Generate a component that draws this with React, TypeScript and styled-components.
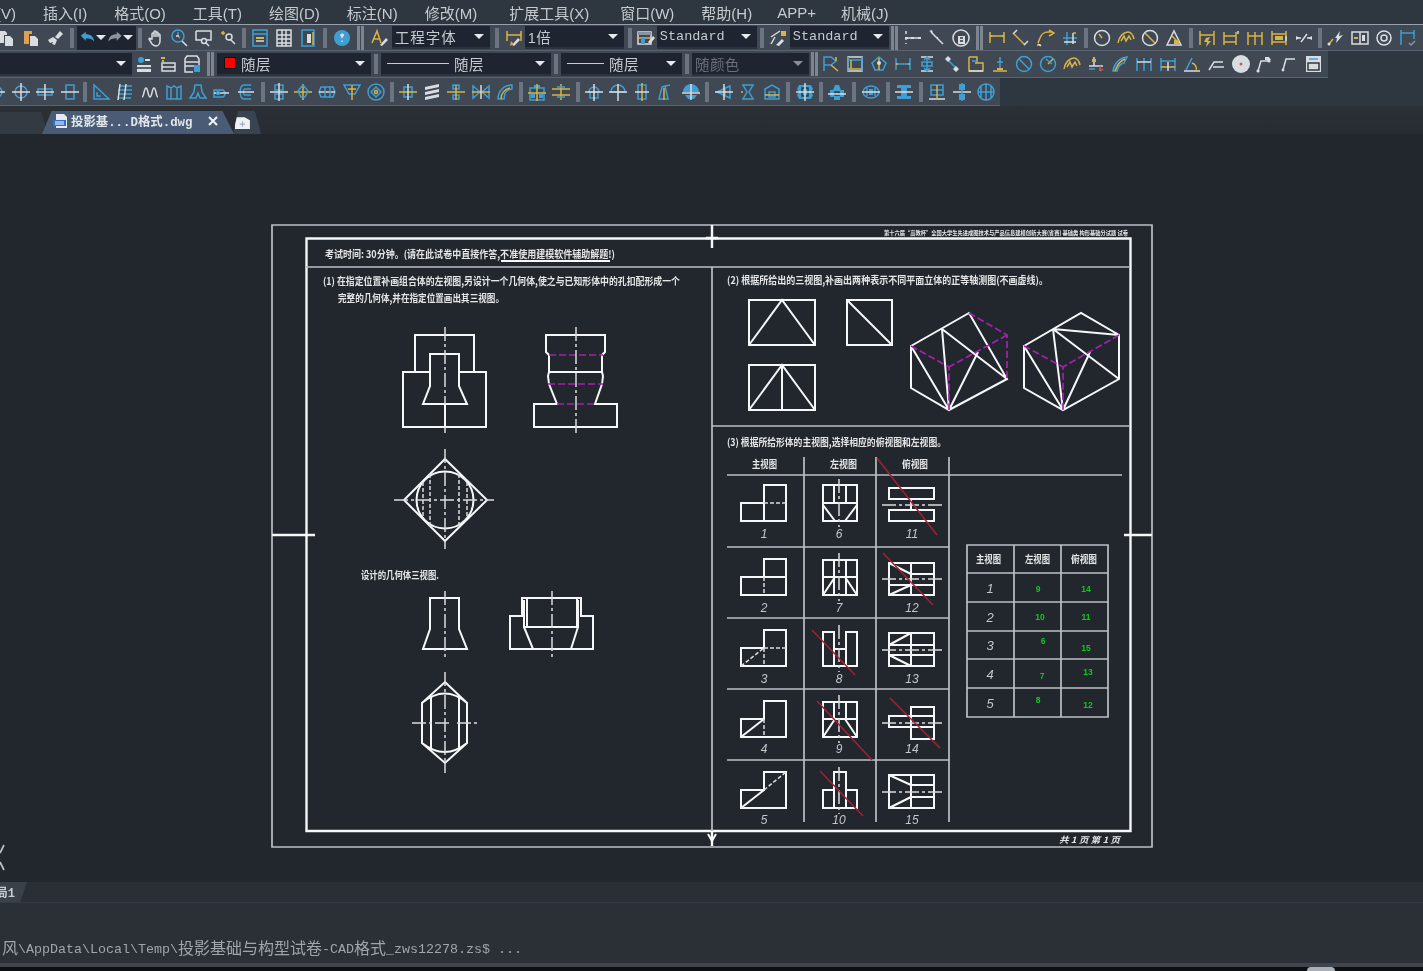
import React from "react";
import styled, { createGlobalStyle } from "styled-components";

const Global = createGlobalStyle`
  html, body { margin: 0; padding: 0; background: #0d0f12; }
`;
const SANS = `"Liberation Sans", "Noto Sans CJK SC", sans-serif`;
const MONO = `"Liberation Mono", "Noto Sans CJK SC", monospace`;

const App_ = styled.div`
  width: 1423px; height: 971px; overflow: hidden; display: flex; flex-direction: column;
  background: #21272d; font-family: ${SANS}; filter: blur(0.4px);
`;
const MenuBar = styled.nav`
  height: 24px; flex: none; display: flex; align-items: center; gap: 27px; padding-left: 0;
  background: #2e3740; border-bottom: 1px solid #97a2ae; white-space: nowrap; overflow: hidden;
`;
const MenuItem = styled.span<{ $shift: number }>`
  font-size: 15px; color: #c6cbd0; flex: none; margin-left: ${(p) => p.$shift}px;
`;
const ToolArea = styled.div`flex: none; background: #2e3740;`;
const ToolRow = styled.div<{ $w: number; $h: number; $offset: number }>`
  width: ${(p) => p.$w}px; height: ${(p) => p.$h}px; display: flex; align-items: center;
  background: #3f4853; border-bottom: 1px solid #5a6470; box-sizing: border-box; overflow: hidden;
  & > :first-child { margin-left: ${(p) => p.$offset}px; }
`;
const Slot = styled.span<{ $w: number }>`
  flex: none; width: ${(p) => p.$w}px; display: flex; justify-content: center; align-items: center;
  svg { display: block; width: 20px; height: 20px; }
`;
const Sep = styled.span<{ $w: number }>`
  flex: none; width: ${(p) => p.$w}px; display: flex; justify-content: center; gap: 1px;
  &::before { content: ""; width: 4px; height: 20px; background: #6b7480; }
`;
const DoubleSep = styled(Sep)`
  &::after { content: ""; width: 3px; height: 24px; background: #7c8590; }
  &::before { width: 3px; height: 24px; background: #7c8590; }
`;
const Combo = styled.span<{ $w: number; $dim?: boolean }>`
  flex: none; width: ${(p) => p.$w}px; height: 23px; box-sizing: border-box; padding: 0 6px 0 3px;
  display: flex; align-items: center; gap: 5px; background: #1e2430;
  border-bottom: 2px solid #2c333d; white-space: nowrap; overflow: hidden;
  color: ${(p) => (p.$dim ? "#6a7078" : "#c6cbd0")}; font-size: 14.5px; letter-spacing: .4px;
`;
const MonoLabel = styled.span`font-family: ${MONO}; font-size: 13.5px; letter-spacing: 0;`;
const WideLabel = styled.span`letter-spacing: 1px;`;
const Grow = styled.span`flex: 1;`;
const Caret = styled.span<{ $dim?: boolean }>`
  flex: none; width: 0; height: 0; border-left: 5px solid transparent; border-right: 5px solid transparent;
  border-top: 5px solid ${(p) => (p.$dim ? "#8a9098" : "#e6e9ec")};
`;
const ColorChip = styled.span`width: 10px; height: 10px; background: #f00; border: 1px solid #111; margin-left: 4px; flex: none;`;
const LinePreview = styled.span<{ $w: number }>`width: ${(p) => p.$w}px; height: 1px; background: #c6cbd0; margin-left: 3px; flex: none;`;
const UndoGroup = styled.span`
  flex: none; width: 59px; height: 24px; background: #1e2430; display: flex; align-items: center; justify-content: space-between; padding: 0 3px; box-sizing: border-box;
  svg { display: block; width: 17px; height: 17px; }
`;

const TabStrip = styled.div`
  height: 28px; flex: none; display: flex; align-items: flex-end; background: linear-gradient(#2b3037, #272c33);
`;
const DimTab = styled.div`
  width: 48px; height: 22px; flex: none; background: #333a42; clip-path: polygon(0 0, 86% 0, 100% 100%, 0 100%);
`;
const ActiveTab = styled.div`
  width: 192px; height: 23px; flex: none; margin-left: -6px; box-sizing: border-box; padding: 0 15px 4px 11px;
  display: flex; align-items: center; background: #4a5c75; clip-path: polygon(5% 0, 94% 0, 100% 100%, 0 100%);
  color: #e2e6ea; white-space: nowrap;
  svg { flex: none; }
`;
const TabName = styled.span`font-family: ${MONO}; font-weight: 700; font-size: 12.4px; margin-left: 3px; flex: 1;`;
const NewTab = styled.div`
  width: 28px; height: 23px; flex: none; margin-left: -1px; box-sizing: border-box; padding-left: 2px; background: #3a4450; display: flex; align-items: center;
  clip-path: polygon(18% 0, 78% 0, 100% 100%, 0 100%);
`;

const Canvas = styled.main`height: 748px; flex: none; background: #21272d;`;
const Sheet = styled.svg`
  display: block; width: 1423px; height: 748px; fill: none;
  .f { stroke: #f6f7f8; stroke-width: 2.4; }
  .t { stroke: #f6f7f8; stroke-width: 2; }
  .g { stroke: #bcbfc3; stroke-width: 1.7; }
  .cd { stroke: #dadcde; stroke-width: 1.5; stroke-dasharray: 14 3 3 3; }
  .hd { stroke: #dadcde; stroke-width: 1.5; stroke-dasharray: 4 2; }
  .m { stroke: #a81fb0; stroke-width: 1.7; stroke-dasharray: 7 3; }
  .r { stroke: #a32035; stroke-width: 1.5; }
  text { font-family: "Noto Sans CJK SC", sans-serif; font-weight: 700; fill: #e4e5e6; stroke: none; }
  .n { font-family: "Liberation Sans", sans-serif; font-style: italic; font-weight: 400; fill: #c4c7ca; }
  .a { fill: #10c81a; font-family: "Liberation Sans", sans-serif; }
`;

const ModelStrip = styled.div`height: 20px; flex: none; background: #2a2f36; border-bottom: 1px solid #353b42; box-sizing: content-box; display: flex;`;
const ModelTab = styled.div`
  width: 27px; height: 20px; box-sizing: border-box; background: #3b4148; color: #c6cbd0; font-family: ${MONO}; font-size: 12px; font-weight: 700;
  clip-path: polygon(0 0, 100% 0, 75% 100%, 0 100%); display: flex; align-items: center; justify-content: flex-end; padding-right: 12px; white-space: nowrap; overflow: hidden;
`;
const Command = styled.div`height: 60px; flex: none; background: #2b3036; display: flex; align-items: flex-end; padding: 0 0 6px 2px; box-sizing: border-box; color: #a0a5aa; white-space: nowrap;`;
const CmdLatin = styled.span`font-family: ${MONO}; font-size: 13.33px;`;
const CmdCjk = styled.span`font-family: "Noto Sans CJK SC", sans-serif; font-size: 16px; line-height: 20px;`;
const BottomEdge = styled.div`height: 4px; flex: none; background: #3f454c;`;
const Taskbar = styled.div`flex: 1; background: #0d0f12; display: flex; justify-content: flex-end; padding-right: 88px;`;
const TaskMark = styled.span`width: 28px; height: 4px; background: #aab0b6; border-radius: 14px 14px 0 0;`;

/* ---------- toolbar icons ---------- */
const C: Record<string, string> = { b: "#3f9fd3", y: "#d8b446", w: "#d9dde2", g: "#8a94a0", r: "#c9604f", o: "#e0a050", d: "#2e3740" };
const Ico = ({ d }: { d: string }) => (
  <svg viewBox="0 0 20 20">
    {d.split(";").map((part, i) => {
      const [k, path] = part.split("|");
      const filled = k === k.toUpperCase();
      const col = C[k.toLowerCase()];
      return <path key={i} d={path} fill={filled ? col : "none"} stroke={filled ? "none" : col} strokeWidth={filled ? 0 : 1.5} />;
    })}
  </svg>
);
const Icons = ({ list, w = 24.2 }: { list: string[]; w?: number }) => (
  <>{list.map((d, i) => <Slot key={i} $w={w}><Ico d={d} /></Slot>)}</>
);
const circ = (x: number, y: number, r: number) => `M${x - r} ${y}a${r} ${r} 0 1 0 ${2 * r} 0a${r} ${r} 0 1 0 ${-2 * r} 0`;

const dimH = "y|M3 4v11M17 4v11M3 8h14;Y|M3 6.5l3 1.5-3 1.5zM17 6.5l-3 1.5 3 1.5z";
const R1a = [
  "W|M2 3h6l2 2v2H7v8H2z;W|M8 8h5l3 3v7H8z",
  "O|M3 3h8v3H8v10H3z;W|M9 8h5l3 3v7H9z",
  "W|M10 9l5-6 3 3-5 5z;W|M3 12l5-3 4 3-2 5-3-1 1-2-3 1z",
];
const R1b = [
  "w|M6 11V6a1 1 0 0 1 2 0v3V4a1 1 0 0 1 2 0v5V5a1 1 0 0 1 2 0v4V7a1 1 0 0 1 2 0v6c0 3-2 5-4 5s-3-1-4-2l-3-5c0-1 1-1 2 0z",
  `b|${circ(8, 8, 6)}M8 4v4l2 2;w|M12 13l5 5M6 8h3`,
  `w|M2 3h15v9h-5M2 3v9h5;w|${circ(10, 13, 2.5)}M12 15l3 3`,
  `y|M2 5h4M4 3v4;w|${circ(10, 9, 3)}M12 12l4 4`,
];
const R1c = [
  "b|M3 2h14v16H3z;b|M3 6h14;Y|M6 9h8v2H6z;w|M6 13h8",
  "w|M3 2h14v16H3z M3 7h14M3 11h14M3 15h14M8 2v16M12 2v16",
  "b|M4 2h12v16H4z;W|M9 6h4v9H9z;y|M15 4v13",
];
const help = `B|${circ(10, 10, 8)};W|M8 7c1-2 4-2 4 0 0 2-2 2-2 4h0;W|M9.2 12.5h1.6v1.6H9.2z`;
const aFont = "y|M3 15L8 3l4 12M5 11h6;W|M11 17l6-7 2 2-6 6z";
const dimScale = "y|M3 3v10M17 3v10M3 7h14;W|M8 17l6-7 2 2-6 6z;O|M7 13l3 3-4 2z";
const tblIcon = "w|M2 4h13v12H2z;G|M2 4h13v3H2z;y|M2 10h13;B|M5 10h4v6H5z;W|M12 14l5-6 2 2-5 6z";
const mlIcon = "Y|M13 3h5v5h-5z;w|M3 9l9-6M3 16l4-7;W|M8 17l6-6 2 2-5 5z";
const R1d = [
  "w|M3 3v3M3 9v3M3 15v1M3 10h14;W|M2 9h3v2H2zM8 9h3v2H8zM15 9h3v2h-3z",
  "w|M4 4l12 12;W|M2 3l3-1 1 3zM9 9l2 0 0 2z",
  `w|${circ(10, 10, 8)};W|M7 8h7v8H7z;d|M9 10h3M9 13h3`,
];
const R1e = [
  dimH,
  "y|M3 6l11 11;w|M6 2L2 6M17 13l-4 4",
  "y|M3 15l2-5c1-3 4-6 8-6h4M2 17h4M14 2l5 3-5 3;w|M3 16l3 2",
  "b|M7 4v13M3 10h14;w|M4 14h12M13 5v11;y|M13 5h3",
];
const R1f = [
  `w|${circ(10, 10, 7.5)};y|M10 10l-3-4`,
  `y|M2 15c1-7 6-11 10-11 3 0 5 3 6 7M5 13l3-5 2 5 3-5 2 4`,
  `w|${circ(10, 10, 7.5)};y|M5 5l10 10`,
  `w|M3 17L10 3l7 14z;y|M8 8l6 6;Y|M10 12h5v4h-5z`,
];
const R1g = [
  "y|M3 3v14M17 3v14M3 7h14;Y|M9 10l4-1-2 4 3 0-5 6 1-5-3 0z",
  "y|M3 4v13M15 4v13M3 8h12M3 14h12;w|M17 3v3",
  "y|M3 4v13M10 4v13M17 4v13M3 8h14",
  "y|M3 3v14M17 3v14M3 6h14M3 14h14;Y|M6 8h8v4H6z;w|M17 8v5",
  "w|M2 10h5M13 10h5M7 14l6-8;W|M2 8l4 2-4 2zM18 8l-4 2 4 2z",
];
const R1h = [
  `y|M3 16l4-5;W|M9 10l5-7-1 5 4-1-7 8 1-5z;W|${circ(3, 16, 1.5)}`,
  "w|M2 4h16v12H2zM10 4v12;Y|M4 9h4v2H4z;W|M12 7h3v6h-3z",
  `w|${circ(10, 10, 7)};w|${circ(10, 10, 3)}`,
  "b|M3 2v15M16 2v9M3 5h13;g|M11 15l2 2 4-4",
];
const R2a = [
  `W|M3 11h14v7H3z;d|M3 14h14;B|${circ(7, 6, 3)};W|M11 5h5v2h-5z`,
  `w|M4 9h13v8H4zM4 13h13;Y|M3 3h4v2H3zM4 6h2v2H4z`,
  `w|M3 5l2-3h10l2 3v7H3zM3 8h14M3 12v6h8;B|M12 11h6v7h-6z`,
];
const R2b = [
  "b|M3 3h7l5 4-5 4H3zM3 3v14;y|M10 11l7 6M15 3v4",
  "w|M3 3h14v14H3z;b|M3 6h14M3 3v14M17 3v14;y|M3 15h14M6 6v9",
  `b|M3 9l7-6 7 6-3 7H6z;y|M10 4v12;W|${circ(10, 9, 2)}`,
  "b|M3 4v12M17 4v12M3 10h14;Y|M3 9l3 1-3 1zM17 9l-3 1 3 1z",
  "w|M4 3h12M4 17h12;b|M10 3v14M7 6l3-3 3 3M7 14l3 3 3-3;b|M5 8h10v4H5z",
  "b|M4 4l12 12;W|M6 2l3 3-3 3-3-3zM14 12l3 3-3 3-3-3z",
  "y|M3 3h8v6M3 3v14h14V9H9;b|M6 7h5;w|M3 17h14",
  "b|M10 3v11;y|M3 17h14;Y|M7 14h6v2H7z;b|M7 8h6",
  `b|${circ(10, 10, 7.5)}M5 5l10 10`,
  `b|${circ(10, 10, 7.5)};y|M10 10l5-5;b|M8 5l6 5`,
  "y|M2 15c1-7 6-11 10-11 3 0 5 3 6 7M5 13l3-5 2 5 3-5 2 4",
  "w|M8 3v9M3 12h14;Y|M6 5h4v3H6z;r|M14 12v5M17 15l-3 2;b|M3 15h6",
  "b|M3 17c1-7 6-13 14-14l-3 6c-4 1-6 4-7 8z;y|M5 17c2-6 5-10 10-12",
  "b|M3 4v13M10 4v13M17 4v13;w|M3 8h14",
  "b|M3 4v13M17 4v13M3 7h14;y|M3 13h14;w|M10 8v9",
  "b|M4 16l6-12;w|M2 17h16;y|M10 9a6 6 0 0 1 4 8",
  "w|M2 16l5-8h9M6 13h11",
  `W|${circ(10, 10, 9)};R|${circ(10, 10, 1.5)}`,
  `w|M3 17l3-10h8;W|${circ(3, 17, 1.6)};W|${circ(14, 7, 1.6)};W|M10 3h4l2 3h-6z`,
  `w|M4 16l3-11h9;W|${circ(4, 16, 1.4)}`,
  "W|M3 2h15v16H3z;d|M5 9h11v7H5z;W|M7 10v5h2v-2h2v2h2v-5h-2v2H9v-2z;b|M6 5h9",
];
const R3a = [
  `b|${circ(10, 10, 5)};w|M2 10h16`,
  `b|${circ(10, 10, 6)};w|M10 1v18M1 10h18`,
  "b|M3 7h14v6H3z;w|M10 2v16M1 10h18",
  "b|M6 3h8v14H6z;w|M1 10h18",
];
const R3b = [
  "b|M3 3v14h15zM6 10v4h4",
  "b|M4 4h13M3 8h14M3 12h14M4 16h12;w|M5 2L3 18M11 2L9 18",
  "w|M2 15c2 0 2-9 4-9s2 9 4 9 2-9 4-9 2 9 4 9",
  "b|M3 4l4 2 3-2 3 2 4-2v13H3zM7 6v11M13 6v11",
  "b|M7 3h6l1 7 4 6h-6l-2-5-2 5H2l4-6z",
  `b|M2 8h9a4 4 0 0 1 0 7H2z;w|M2 11h15;b|${circ(6, 11, 1.5)}`,
  "b|M15 3H8C3 3 3 17 8 17h7M15 7H9c-2 0-2 6 0 6h6;w|M2 10h16",
];
const R3c = [
  "b|M6 3h8v5H6zM6 12h8v5H6z;w|M1 10h18M10 1v18",
  "y|M1 10h18M10 2v16;b|M5 9l5-6 5 6-3 6H8z",
  "b|M4 5h12l2 5-2 5H4l-2-5z;w|M2 10h16;b|M8 5v10M13 5v10",
  "b|M2 3h16l-5 9H7z;y|M10 3v15M6 7h8",
  `b|${circ(10, 10, 8)};b|M10 5l5 5-5 5-5-5z;y|${circ(10, 10, 1.5)}`,
];
const R3d = [
  "b|M6 5h8v10H6z;y|M1 10h18;w|M10 2v16",
  "W|M3 5l14-3v3L3 8zM3 10l14-3v3L3 13zM3 15l14-3v3L3 18z",
  "b|M7 3h6v4H7zM7 13h6v4H7z;y|M1 10h18M10 3v15",
  "b|M2 4l7 6-7 6zM18 4l-7 6 7 6z;y|M1 10h18;w|M10 3v14",
  "b|M3 17c0-8 6-14 14-14v4l-4 1-3 3-1 6z;y|M6 17c0-6 4-10 9-11",
];
const R3e = [
  "b|M3 6h14v12H3z;B|M7 3h6v3H7z;y|M1 11h18M10 2v17;B|M4 12h4v4H4zM12 12h4v4h-4z",
  "y|M1 7h18M1 13h18M10 2v16;b|M6 5h8M6 15h8",
];
const R3f = [
  "b|M5 10a5 5 0 0 1 10 0zM6 10v6h8v-6;w|M1 10h18M10 2v17",
  "b|M3 10a7 7 0 0 1 14 0z;w|M1 10h18M10 2v17",
  "b|M6 3h8v14H6z;y|M10 1v18;w|M3 10h14",
  "b|M3 17h9L9 4l-3 1zM14 3l-8 2;y|M8 6v12",
  "B|M2 10a8 8 0 0 1 16 0zM4 13h12l-3 4H7z;w|M1 11h18M10 2v16",
];
const R3g = [
  "b|M3 10l13-6v12zM11 6v8;w|M1 10h18M10 2v16",
  "b|M5 3h10l-4 7 4 7H5l4-7z;y|M3 10h2",
  "b|M3 17V7l7-4 7 4v10zM7 10h6v5H7z;y|M3 13h14",
];
const R3h = ["B|M4 3h12l2 4-2 3 2 3-2 4H4l-2-4 2-3-2-3z;d|M7 6h6v8H7z;w|M10 1v18M1 10h18"];
const R3i = ["B|M8 3h4l2 5h3v7h-4v3H7v-3H3V8h3z;d|M8 10h4v3H8z;w|M1 12h18"];
const R3j = ["b|M2 10a8 6 0 0 1 16 0a8 6 0 0 1-16 0zM6 6v8M14 6v8;B|M8 7h4v6H8z;w|M1 10h18"];
const R3k = ["B|M3 3h14v3H3zM3 14h14v3H3zM7 6h6v8H7z;w|M1 10h18"];
const R3l = [
  "b|M4 3h12v10H4zM4 8h12;w|M2 17h16;y|M10 3v14",
  "B|M7 2h6v6H7zM7 12h6v6H7z;w|M1 10h18;b|M10 1v18",
  `b|${circ(10, 10, 8)}M2 10h16M10 2v16M5 4v12M15 4v12`,
];

const CADDrawing = () => {
  const bot = [521, 595, 666, 737, 808];
  const lbl = [538, 612, 683, 753, 824];
  const ans = [
    [1038, 592, "9"], [1040, 620, "10"], [1043, 644, "6"], [1042, 679, "7"], [1038, 703, "8"],
    [1086, 592, "14"], [1086, 620, "11"], [1086, 651, "15"], [1088, 675, "13"], [1088, 708, "12"],
  ] as const;
  const Lshape = (b: number) => `M741 ${b - 18}H764V${b - 36}H786V${b}H741Z`;
  return (
    <Sheet viewBox="0 134 1423 748">
      <path className="g" d="M272 225H1152V847H272Z" />
      <path className="f" d="M306.5 238.5H1130.5V831H306.5Z" />
      <path className="f" d="M712 225V248M706 238H718M272 535H315M1124 535H1152M712 831V846" />
      <path className="t" d="M708 834L712 841L716 834" />
      <path className="g" d="M306 267H1130M712 267V831M712 426H1130" />
      <path className="t" d="M501 261H610" />

      <text x="884" y="235" fontSize="6" textLength={244} lengthAdjust="spacingAndGlyphs">第十六届“高教杯”全国大学生先进成图技术与产品信息建模创新大赛(省赛) 基础类 构形基础分试题 试卷</text>
      <text x="325" y="258" fontSize="10" textLength={290} lengthAdjust="spacingAndGlyphs">考试时间: 30分钟。(请在此试卷中直接作答,不准使用建模软件辅助解题!)</text>
      <text x="323" y="285" fontSize="10" textLength={357} lengthAdjust="spacingAndGlyphs">(1) 在指定位置补画组合体的左视图,另设计一个几何体,使之与已知形体中的孔扣配形成一个</text>
      <text x="338" y="302" fontSize="10" textLength={166} lengthAdjust="spacingAndGlyphs">完整的几何体,并在指定位置画出其三视图。</text>
      <text x="361" y="579" fontSize="10" textLength={78} lengthAdjust="spacingAndGlyphs">设计的几何体三视图.</text>
      <text x="727" y="284" fontSize="10" textLength={321} lengthAdjust="spacingAndGlyphs">(2) 根据所给出的三视图,补画出两种表示不同平面立体的正等轴测图(不画虚线)。</text>
      <text x="727" y="446" fontSize="10" textLength={219} lengthAdjust="spacingAndGlyphs">(3) 根据所给形体的主视图,选择相应的俯视图和左视图。</text>

      {/* problem 1 */}
      <path className="t" d="M403 372H415V335H474V372H486V427H403ZM415 372H430M459 372H474" />
      <path className="t" d="M430 354H459V386L467 404H423L430 386ZM445 404V427" />
      <path className="cd" d="M445 327V404M445 427V433" />
      <path className="t" d="M546 335H605V352L602 355V372L603 376L602 384L595 404H617V427H534V404H557L549 384L548 376L549 372V355L546 352Z M549 372H603" />
      <path className="m" d="M549 355H603M548 384H603M557 404H595" />
      <path className="cd" d="M576 327V433" />
      <path className="t" d="M404 500L445 459L487 500L445 541Z" />
      <circle className="t" cx="445" cy="500" r="28.5" />
      <path className="hd" d="M423 482V518M430 474V526M459 474V526M467 482V518" />
      <path className="cd" d="M394 500H494M445 449V549" />
      <path className="t" d="M430 598H459V629L467 649H423L430 629Z" />
      <path className="cd" d="M445 591V657" />
      <path className="t" d="M510 616H522V598H581V616H593V649H510ZM527 598V627M577 598V627M524 600V627H578V600M524 627L533 649M578 627L571 649" />
      <path className="cd" d="M552 591V657" />
      <path className="t" d="M445 682L467 703V743L445 763L422 743V703ZM431 696V750M459 696V750M422 703Q445 684 467 703M422 743Q445 761 467 743" />
      <path className="cd" d="M412 723H450M457 723H478M445 672V773" />

      {/* problem 2 */}
      <path className="t" d="M749 300H815V345H749ZM749 345L782 300L815 345M847 300H892V345H847ZM847 300L892 345M749 365H815V410H749ZM749 410L782 365L815 410M782 365V410" />
      <path className="t" d="M911 346L969 313L1007 379L949 410L911 388ZM942 329L949 410M942 329L1007 379M911 346L949 410M978 352L949 410" />
      <path className="m" d="M969 313L1007 335V379M1007 335L949 367M911 346L949 367V410" />
      <path className="t" d="M1024 346L1081 313L1119 335V379L1063 410L1024 388ZM1053 329L1119 335M1053 329L1063 410M1053 329L1119 379M1024 346L1063 410M1090 352L1063 410" />
      <path className="m" d="M1119 335L1063 367M1024 346L1063 367V410" />

      {/* problem 3 */}
      <path className="g" d="M727 475H1122M804 457V822M876 457V822M949 457V822M727 547H949M727 618H949M727 689H949M727 760H949" />
      <text x="752" y="468" fontSize="10" textLength={25} lengthAdjust="spacingAndGlyphs">主视图</text>
      <text x="830" y="468" fontSize="10" textLength={27} lengthAdjust="spacingAndGlyphs">左视图</text>
      <text x="902" y="468" fontSize="10" textLength={26} lengthAdjust="spacingAndGlyphs">俯视图</text>

      {bot.map((b, i) => (
        <React.Fragment key={b}>
          <text className="n" x="764" y={lbl[i]} fontSize="12" textAnchor="middle">{i + 1}</text>
          <text className="n" x="839" y={lbl[i]} fontSize="12" textAnchor="middle">{i + 6}</text>
          <text className="n" x="912" y={lbl[i]} fontSize="12" textAnchor="middle">{i + 11}</text>
          {i < 4 && <path className="t" d={Lshape(b)} />}
        </React.Fragment>
      ))}
      <path className="t" d="M764 503V521" /><path className="hd" d="M764 503H786" />
      <path className="t" d="M764 577H786" /><path className="hd" d="M764 577V595" />
      <path className="hd" d="M764 648H786M741 666L764 648M764 648V666" />
      <path className="t" d="M741 737L764 719" /><path className="hd" d="M764 719V737" />
      <path className="t" d="M741 790H764V772H786V808H741ZM741 808L764 790" /><path className="hd" d="M764 790L786 772" />

      <path className="t" d="M823 485H857V521H823ZM834 485V503M846 485V503M823 503H857M823 505L835 521M857 505L845 521" />
      <path className="t" d="M823 560H857V595H823ZM834 560V595M846 560V595M823 577H857M823 595L835 577M857 595L845 577" />
      <path className="t" d="M823 632H834V666H823ZM846 632H857V666H846ZM834 649H846M834 666H846" />
      <path className="t" d="M823 702H857V737H823ZM834 702V719M846 702V719M823 719H857M823 737L835 719M857 737L845 719" />
      <path className="t" d="M823 790H834V772H846V790H857V808H823ZM834 790V808M846 790V808" />
      <path className="cd" d="M839 479V527M839 553V601M839 625V672M839 695V743M839 767V814" />

      <path className="t" d="M889 488H934V499H889ZM889 510H934V521H889ZM911 499V510" />
      <path className="t" d="M889 563H934V595H889ZM911 563V595M911 574H934M889 585H934M889 563L911 574M889 595L911 585" />
      <path className="t" d="M889 633H934V666H889ZM911 633V666M889 645H934M889 655H934M889 645L911 633M889 655L911 666" />
      <path className="t" d="M911 707H934V739H911ZM889 716H934V727H889Z" />
      <path className="t" d="M889 775H934V808H889ZM911 775V808M911 785H934M911 797H934M889 775L911 785M889 808L911 797" />
      <path className="cd" d="M882 505H942M882 579H942M882 650H942M882 723H942M882 792H942" />
      <path className="r" d="M877 458L937 535M883 553L933 605M812 630L855 675M817 701L872 760M890 698L940 748M820 771L863 816" />

      {/* answer table */}
      <path className="g" d="M967 545H1108V717H967ZM1014 545V717M1061 545V717M967 573H1108M967 602H1108M967 631H1108M967 659H1108M967 688H1108" />
      <text x="976" y="563" fontSize="10" textLength={25} lengthAdjust="spacingAndGlyphs">主视图</text>
      <text x="1025" y="563" fontSize="10" textLength={25} lengthAdjust="spacingAndGlyphs">左视图</text>
      <text x="1071" y="563" fontSize="10" textLength={26} lengthAdjust="spacingAndGlyphs">俯视图</text>
      {[593, 622, 650, 679, 708].map((y, i) => (
        <text key={y} className="n" x="990" y={y} fontSize="13" textAnchor="middle">{i + 1}</text>
      ))}
      {ans.map(([x, y, s]) => (
        <text key={`${x}${y}`} className="a" x={x} y={y} fontSize="8.5" textAnchor="middle">{s}</text>
      ))}
      <text x="1059" y="843" fontSize="8.5" textLength={61} lengthAdjust="spacingAndGlyphs" fontStyle="italic">共 1 页  第 1 页</text>
      <path className="g" d="M4 845L0 853M0 862L4 870" />
    </Sheet>
  );
};

const MENU: [string, number][] = [
  ["视图(V)", -34], ["插入(I)", 0], ["格式(O)", 0], ["工具(T)", 0], ["绘图(D)", 0], ["标注(N)", 0],
  ["修改(M)", 0], ["扩展工具(X)", 5], ["窗口(W)", 4], ["帮助(H)", 0], ["APP+", -2], ["机械(J)", -2],
];

export default function App() {
  return (
    <App_>
      <Global />
      <MenuBar>
        {MENU.map(([m, shift]) => <MenuItem key={m} $shift={shift}>{m}</MenuItem>)}
      </MenuBar>
      <ToolArea>
        <ToolRow $w={1423} $h={26} $offset={-5}>
          <Icons list={R1a} />
          <Sep $w={9.4} />
          <UndoGroup>
            <Ico d="B|M1 8l6-5v3c6 0 10 3 10 9-2-3-5-4-10-4v3z" />
            <Caret />
            <Ico d="G|M19 8l-6-5v3C7 6 3 9 3 15c2-3 5-4 10-4v3z" />
            <Caret />
          </UndoGroup>
          <Sep $w={8} />
          <Icons list={R1b} />
          <Sep $w={7.2} />
          <Icons list={R1c} />
          <Sep $w={9.4} />
          <Icons list={[help]} />
          <DoubleSep $w={12} />
          <Icons list={[aFont]} w={25.8} />
          <Combo $w={98}><WideLabel>工程字体</WideLabel><Grow /><Caret /></Combo>
          <Sep $w={14} />
          <Icons list={[dimScale]} w={21} />
          <Combo $w={99}><span>1倍</span><Grow /><Caret /></Combo>
          <Sep $w={12} />
          <Icons list={[tblIcon]} w={21} />
          <Combo $w={100}><MonoLabel>Standard</MonoLabel><Grow /><Caret /></Combo>
          <Sep $w={10} />
          <Icons list={[mlIcon]} w={23} />
          <Combo $w={99}><MonoLabel>Standard</MonoLabel><Grow /><Caret /></Combo>
          <DoubleSep $w={12} />
          <Icons list={R1d} />
          <DoubleSep $w={11.5} />
          <Icons list={R1e} />
          <Sep $w={8.2} />
          <Icons list={R1f} />
          <Sep $w={8.2} />
          <Icons list={R1g} />
          <Sep $w={8} />
          <Icons list={R1h} />
        </ToolRow>
        <ToolRow $w={1328} $h={27} $offset={0}>
          <Combo $w={132}><Grow /><Caret /></Combo>
          <Icons list={R2a} w={24} />
          <DoubleSep $w={13} />
          <Combo $w={154}><ColorChip /><span>随层</span><Grow /><Caret /></Combo>
          <Sep $w={10} />
          <Combo $w={170}><LinePreview $w={62} /><span>随层</span><Grow /><Caret /></Combo>
          <Sep $w={10} />
          <Combo $w={121}><LinePreview $w={37} /><span>随层</span><Grow /><Caret /></Combo>
          <Sep $w={10} />
          <Combo $w={117} $dim><span>随颜色</span><Grow /><Caret $dim /></Combo>
          <DoubleSep $w={10} />
          <Icons list={R2b} w={24.1} />
        </ToolRow>
        <ToolRow $w={1000} $h={28} $offset={-15}>
          <Icons list={R3a} />
          <Sep $w={7.3} />
          <Icons list={R3b} />
          <Sep $w={8.6} />
          <Icons list={R3c} />
          <Sep $w={8} />
          <Icons list={R3d} />
          <Sep $w={8} />
          <Icons list={R3e} />
          <Sep $w={8.6} />
          <Icons list={R3f} />
          <Sep $w={9} />
          <Icons list={R3g} />
          <Sep $w={8.4} />
          <Icons list={R3h} />
          <Sep $w={8} />
          <Icons list={R3i} />
          <Sep $w={9.8} />
          <Icons list={R3j} />
          <Sep $w={9} />
          <Icons list={R3k} />
          <Sep $w={9} />
          <Icons list={R3l} />
        </ToolRow>
      </ToolArea>
      <TabStrip>
        <DimTab />
        <ActiveTab>
          <svg width="15" height="16" viewBox="0 0 15 16">
            <path d="M3 1h8l3 3v11H3z" fill="#e6eaf0" />
            <path d="M0 7h13v6H0z" fill="#2f6fd0" />
            <path d="M2 9h9M2 11h9" stroke="#fff" strokeWidth="1" />
          </svg>
          <TabName>投影基...D格式.dwg</TabName>
          <svg width="12" height="12" viewBox="0 0 12 12"><path d="M2 2l8 8M10 2l-8 8" stroke="#f2f4f6" strokeWidth="2" /></svg>
        </ActiveTab>
        <NewTab>
          <svg width="16" height="13" viewBox="0 0 15 12">
            <path d="M0 1h9l5 3v8H0z" fill="#eef1f5" />
            <path d="M7 5v5M4.5 7.5h5" stroke="#9fb0c4" strokeWidth="1.2" />
          </svg>
        </NewTab>
      </TabStrip>
      <Canvas><CADDrawing /></Canvas>
      <ModelStrip><ModelTab>布局1</ModelTab></ModelStrip>
      <Command>
        <CmdCjk>风</CmdCjk><CmdLatin>\AppData\Local\Temp\</CmdLatin><CmdCjk>投影基础与构型试卷</CmdCjk><CmdLatin>-CAD</CmdLatin><CmdCjk>格式</CmdCjk><CmdLatin>_zws12278.zs$ ...</CmdLatin>
      </Command>
      <BottomEdge />
      <Taskbar><TaskMark /></Taskbar>
    </App_>
  );
}
